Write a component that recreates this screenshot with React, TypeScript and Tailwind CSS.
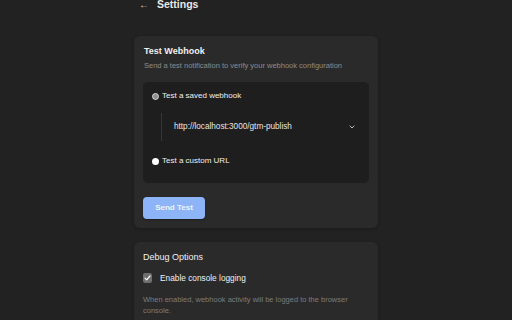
import React from 'react';

export default function App() {
  return (
    <div className="min-h-screen w-full overflow-hidden bg-[#222222] font-['Liberation_Sans',Arial,sans-serif] text-[#ececec]">
      <div className="mx-auto w-[244px]">
        {/* Header */}
        <div className="-mt-[2px] flex h-[13px] items-center pl-[5px]">
          <span className="w-[18px] text-[10px] leading-none text-[#d8d8d8]">←</span>
          <h1 className="text-[10.5px] font-bold leading-none text-[#e8e8e8]">Settings</h1>
        </div>

        {/* Test Webhook */}
        <section className="mt-[25px] rounded-[6px] bg-[#2a2a2a] px-[9px] pb-[9px] pt-[10px] shadow-[0_1px_3px_rgba(0,0,0,0.25)]">
          <h2 className="pl-px text-[9px] font-bold leading-[11px] text-[#f0f0f0]">Test Webhook</h2>
          <p className="mt-[4px] pl-px text-[7.5px] leading-[10px] text-[#8c8c8c]">
            Send a test notification to verify your webhook configuration
          </p>

          <div className="mt-[11px] rounded-[5px] bg-[#1e1e1e] pb-[18px] pl-[9px] pr-[8px] pt-[10px]">
            <label className="flex h-[8px] items-center gap-[3px]">
              <span className="h-[7px] w-[7px] rounded-full border border-[#d6d6d6] bg-[#8e8e8e]" />
              <span className="text-[8px] leading-none text-[#f0f0f0]">Test a saved webhook</span>
            </label>

            <div className="ml-[9px] mt-[13px] flex h-[28px] items-center border-l border-[#363636] pl-[12px] pr-[6px]">
              <span className="flex-1 text-[8.2px] leading-none text-[#e6e6e6]">http://localhost:3000/gtm-publish</span>
              <svg width="6" height="4" viewBox="0 0 6 4" fill="none" className="text-[#bdbdbd]">
                <path d="M1 1l2 2 2-2" stroke="currentColor" strokeWidth="1" strokeLinecap="round" strokeLinejoin="round" />
              </svg>
            </div>

            <label className="mt-[16px] flex h-[8px] items-center gap-[3px]">
              <span className="h-[7px] w-[7px] rounded-full bg-white" />
              <span className="text-[8px] leading-none text-[#f0f0f0]">Test a custom URL</span>
            </label>
          </div>

          <button className="mt-[14px] h-[22px] w-[62px] rounded-[4px] bg-[#8db4f6] text-[8px] font-bold text-[#eef4ff] shadow-[0_1px_2px_rgba(0,0,0,0.3)]">
            Send Test
          </button>
        </section>

        {/* Debug Options */}
        <section className="mt-[14px] rounded-[6px] bg-[#2a2a2a] px-[9px] pb-[10px] pt-[10px] shadow-[0_1px_3px_rgba(0,0,0,0.25)]">
          <h2 className="text-[9px] leading-[11px] text-[#f0f0f0]">Debug Options</h2>
          <label className="mt-[10px] flex h-[10px] items-center gap-[8px]">
            <span className="flex h-[10px] w-[9px] items-center justify-center rounded-[2px] bg-[#6e6e6e]">
              <svg width="7" height="6" viewBox="0 0 7 6" fill="none">
                <path d="M1 3.2l1.7 1.7L6 1" stroke="#ffffff" strokeWidth="1.2" strokeLinecap="round" strokeLinejoin="round" />
              </svg>
            </span>
            <span className="text-[8.3px] leading-none text-[#f0f0f0]">Enable console logging</span>
          </label>
          <p className="mt-[11px] pr-[8px] text-[7.5px] leading-[11px] text-[#7c7c7c]">
            When enabled, webhook activity will be logged to the browser console.
          </p>
        </section>
      </div>
    </div>
  );
}
